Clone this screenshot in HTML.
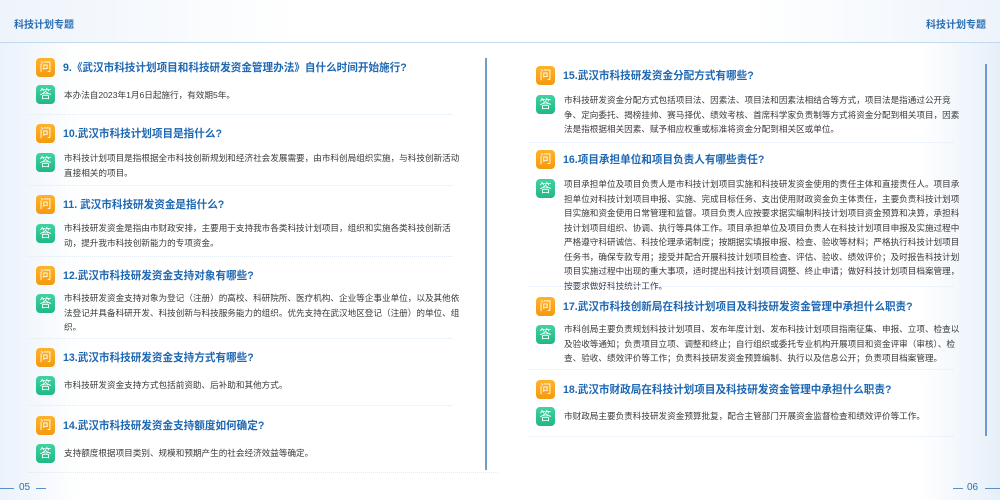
<!DOCTYPE html>
<html><head><meta charset="utf-8"><style>
*{margin:0;padding:0;box-sizing:border-box}
body{width:1000px;height:500px;position:relative;overflow:hidden;background:#fff;font-family:"Liberation Sans","Noto Sans CJK SC",sans-serif}
.bg{position:absolute;inset:0;background:linear-gradient(90deg,#eaf2fb 0,#fff 8%,#fff 92%,#e6eff9 100%)}
.hdr{position:absolute;left:0;top:0;width:1000px;height:43px;border-bottom:1.5px solid #c5d9ee;background:linear-gradient(90deg,#eef4fb,#fff 30%,#fff 75%,#eef4fb)}
.ht{position:absolute;top:16px;font-size:10px;color:#2a6fb5;font-weight:bold}
.i{position:absolute;width:19px;height:19px;border-radius:4px;color:#fff;font-size:12px;line-height:19px;text-align:center}
.q{background:linear-gradient(180deg,#ffb32a,#f39a10)}
.a{background:linear-gradient(180deg,#3fd3a0,#1fb886)}
.qt{position:absolute;font-size:10.6px;font-weight:bold;color:#1e67b2;white-space:nowrap;line-height:14px}
.at{position:absolute;font-size:8.6px;color:#3a3a3a;white-space:nowrap;line-height:14.5px}
.sep{position:absolute;height:0;border-top:1.5px dotted #e3e9f1}
.vl{position:absolute;width:1.5px;background:#6c9ccc}
.pn{position:absolute;top:482px;font-size:10px;color:#2a6fb5}
.pl{position:absolute;top:488px;height:1px;background:#5b8fc7;width:14px}
</style></head><body>
<div class="bg"></div>
<div class="hdr"></div>
<div class="ht" style="left:14px">科技计划专题</div>
<div class="ht" style="left:926px">科技计划专题</div>
<div class="vl" style="left:485px;top:58px;height:412px"></div>
<div class="vl" style="left:985px;top:64px;height:372px"></div>

<div class="i q" style="left:36px;top:58px">问</div>
<div class="qt" style="left:63px;top:61px">9.《武汉市科技计划项目和科技研发资金管理办法》自什么时间开始施行?</div>
<div class="i a" style="left:36px;top:85px">答</div>
<div class="at" style="left:64px;top:88px">本办法自2023年1月6日起施行，有效期5年。</div>
<div class="sep" style="left:28px;width:425px;top:114px"></div>

<div class="i q" style="left:36px;top:124px">问</div>
<div class="qt" style="left:63px;top:127px">10.武汉市科技计划项目是指什么?</div>
<div class="i a" style="left:36px;top:153px">答</div>
<div class="at" style="left:64px;top:151px">市科技计划项目是指根据全市科技创新规划和经济社会发展需要，由市科创局组织实施，与科技创新活动<br>直接相关的项目。</div>
<div class="sep" style="left:28px;width:425px;top:185px"></div>

<div class="i q" style="left:36px;top:195px">问</div>
<div class="qt" style="left:63px;top:198px">11. 武汉市科技研发资金是指什么?</div>
<div class="i a" style="left:36px;top:224px">答</div>
<div class="at" style="left:64px;top:221px">市科技研发资金是指由市财政安排，主要用于支持我市各类科技计划项目，组织和实施各类科技创新活<br>动，提升我市科技创新能力的专项资金。</div>
<div class="sep" style="left:28px;width:425px;top:256px"></div>

<div class="i q" style="left:36px;top:266px">问</div>
<div class="qt" style="left:63px;top:269px">12.武汉市科技研发资金支持对象有哪些?</div>
<div class="i a" style="left:36px;top:294px">答</div>
<div class="at" style="left:64px;top:291px">市科技研发资金支持对象为登记（注册）的高校、科研院所、医疗机构、企业等企事业单位，以及其他依<br>法登记并具备科研开发、科技创新与科技服务能力的组织。优先支持在武汉地区登记（注册）的单位、组<br>织。</div>
<div class="sep" style="left:28px;width:425px;top:338px"></div>

<div class="i q" style="left:36px;top:348px">问</div>
<div class="qt" style="left:63px;top:351px">13.武汉市科技研发资金支持方式有哪些?</div>
<div class="i a" style="left:36px;top:376px">答</div>
<div class="at" style="left:64px;top:378px">市科技研发资金支持方式包括前资助、后补助和其他方式。</div>
<div class="sep" style="left:28px;width:425px;top:405px"></div>

<div class="i q" style="left:36px;top:416px">问</div>
<div class="qt" style="left:63px;top:419px">14.武汉市科技研发资金支持额度如何确定?</div>
<div class="i a" style="left:36px;top:444px">答</div>
<div class="at" style="left:64px;top:446px">支持额度根据项目类别、规模和预期产生的社会经济效益等确定。</div>
<div class="sep" style="left:28px;width:470px;top:472px"></div>

<div class="i q" style="left:536px;top:66px">问</div>
<div class="qt" style="left:563px;top:69px">15.武汉市科技研发资金分配方式有哪些?</div>
<div class="i a" style="left:536px;top:95px">答</div>
<div class="at" style="left:564px;top:93px">市科技研发资金分配方式包括项目法、因素法、项目法和因素法相结合等方式，项目法是指通过公开竞<br>争、定向委托、揭榜挂帅、赛马择优、绩效考核、首席科学家负责制等方式将资金分配到相关项目，因素<br>法是指根据相关因素、赋予相应权重或标准将资金分配到相关区或单位。</div>
<div class="sep" style="left:528px;width:425px;top:142px"></div>

<div class="i q" style="left:536px;top:150px">问</div>
<div class="qt" style="left:563px;top:153px">16.项目承担单位和项目负责人有哪些责任?</div>
<div class="i a" style="left:536px;top:179px">答</div>
<div class="at" style="left:564px;top:177px">项目承担单位及项目负责人是市科技计划项目实施和科技研发资金使用的责任主体和直接责任人。项目承<br>担单位对科技计划项目申报、实施、完成目标任务、支出使用财政资金负主体责任，主要负责科技计划项<br>目实施和资金使用日常管理和监督。项目负责人应按要求据实编制科技计划项目资金预算和决算，承担科<br>技计划项目组织、协调、执行等具体工作。项目承担单位及项目负责人在科技计划项目申报及实施过程中<br>严格遵守科研诚信、科技伦理承诺制度；按期据实填报申报、检查、验收等材料；严格执行科技计划项目<br>任务书，确保专款专用；接受并配合开展科技计划项目检查、评估、验收、绩效评价；及时报告科技计划<br>项目实施过程中出现的重大事项，适时提出科技计划项目调整、终止申请；做好科技计划项目档案管理，<br>按要求做好科技统计工作。</div>
<div class="sep" style="left:528px;width:425px;top:286px"></div>

<div class="i q" style="left:536px;top:297px">问</div>
<div class="qt" style="left:563px;top:300px">17.武汉市科技创新局在科技计划项目及科技研发资金管理中承担什么职责?</div>
<div class="i a" style="left:536px;top:325px">答</div>
<div class="at" style="left:564px;top:322px">市科创局主要负责规划科技计划项目、发布年度计划、发布科技计划项目指南征集、申报、立项、检查以<br>及验收等通知；负责项目立项、调整和终止；自行组织或委托专业机构开展项目和资金评审（审核）、检<br>查、验收、绩效评价等工作；负责科技研发资金预算编制、执行以及信息公开；负责项目档案管理。</div>
<div class="sep" style="left:528px;width:425px;top:369px"></div>

<div class="i q" style="left:536px;top:380px">问</div>
<div class="qt" style="left:563px;top:383px">18.武汉市财政局在科技计划项目及科技研发资金管理中承担什么职责?</div>
<div class="i a" style="left:536px;top:407px">答</div>
<div class="at" style="left:564px;top:409px">市财政局主要负责科技研发资金预算批复，配合主管部门开展资金监督检查和绩效评价等工作。</div>
<div class="sep" style="left:528px;width:425px;top:436px"></div>

<div class="pl" style="left:0"></div>
<div class="pn" style="left:19px">05</div>
<div class="pl" style="left:36px;width:10px"></div>
<div class="pl" style="left:953px;width:10px"></div>
<div class="pn" style="left:967px">06</div>
<div class="pl" style="left:985px;width:15px"></div>
</body></html>
